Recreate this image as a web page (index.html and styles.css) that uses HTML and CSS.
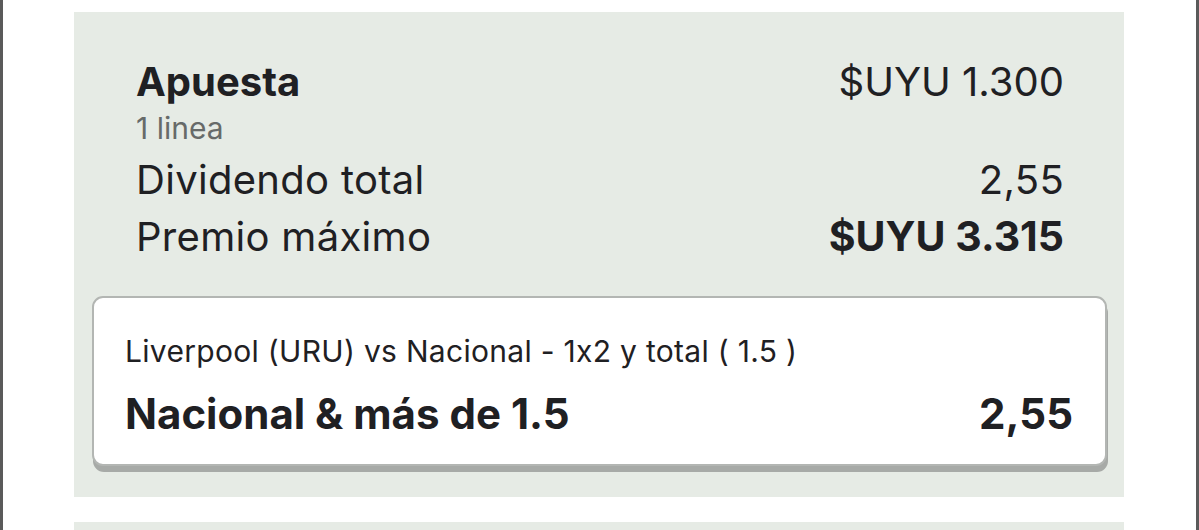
FILE: index.html
```html
<!DOCTYPE html>
<html lang="es">
<head>
  <meta charset="UTF-8">
  <title>Apuesta</title>
  <link rel="stylesheet" href="styles.css">
</head>
<body>
<div class="frame">
  <div class="panel">
    <div class="summary">
      <div class="row">
        <div>
          <div class="title">Apuesta</div>
          <div class="sub">1 linea</div>
        </div>
        <div class="amount">$UYU 1.300</div>
      </div>
      <div class="row line">
        <span>Dividendo total</span>
        <span>2,55</span>
      </div>
      <div class="row line">
        <span>Premio máximo</span>
        <span class="strong">$UYU 3.315</span>
      </div>
    </div>

    <div class="card">
      <div class="match">Liverpool (URU) vs Nacional - 1x2 y total ( 1.5 )</div>
      <div class="pick">
        <span>Nacional &amp; más de 1.5</span>
        <span>2,55</span>
      </div>
    </div>
  </div>

  <div class="panel next"></div>
</div>
</body>
</html>
```

FILE: styles.css
```css
* { box-sizing: border-box; }
body {
  margin: 0;
  background: #fff;
  font-family: Inter, "Noto Sans", Arial, sans-serif;
  color: #1f2023;
  height: 530px;
  overflow: hidden;
}
.frame {
  height: 530px;
  overflow: hidden;
  border-left: 3px solid #5a5a5a;
  border-right: 3px solid #5a5a5a;
  padding: 12px 72px 0 71px;
}
.panel {
  background: #e6ebe5;
  padding: 46px 17px 31px 18px;
}
.panel.next {
  margin-top: 25px;
  height: 40px;
  padding: 0;
}
.summary {
  padding: 0 43px 0 44px;
  margin-bottom: 31px;
}
.row {
  display: flex;
  justify-content: space-between;
  align-items: flex-start;
}
.title {
  font-size: 40px;
  font-weight: 700;
  line-height: 48px;
}
.sub {
  font-size: 30px;
  color: #676a69;
  line-height: 45px;
}
.amount {
  font-size: 40px;
  line-height: 48px;
}
.line {
  font-size: 40px;
  line-height: 57px;
  letter-spacing: 0.3px;
}
.strong {
  font-weight: 700;
  font-size: 41px;
  letter-spacing: 0;
}
.card {
  background: #fff;
  border: 2px solid #b3b6b3;
  border-radius: 11px;
  box-shadow: 1px 6px 0 #a7aaa7;
  padding: 35px 32px 25px 31px;
}
.match {
  font-size: 30px;
  line-height: 36px;
  letter-spacing: 0.3px;
}
.pick {
  display: flex;
  justify-content: space-between;
  font-size: 42px;
  font-weight: 700;
  line-height: 50px;
  margin-top: 20px;
}
```
